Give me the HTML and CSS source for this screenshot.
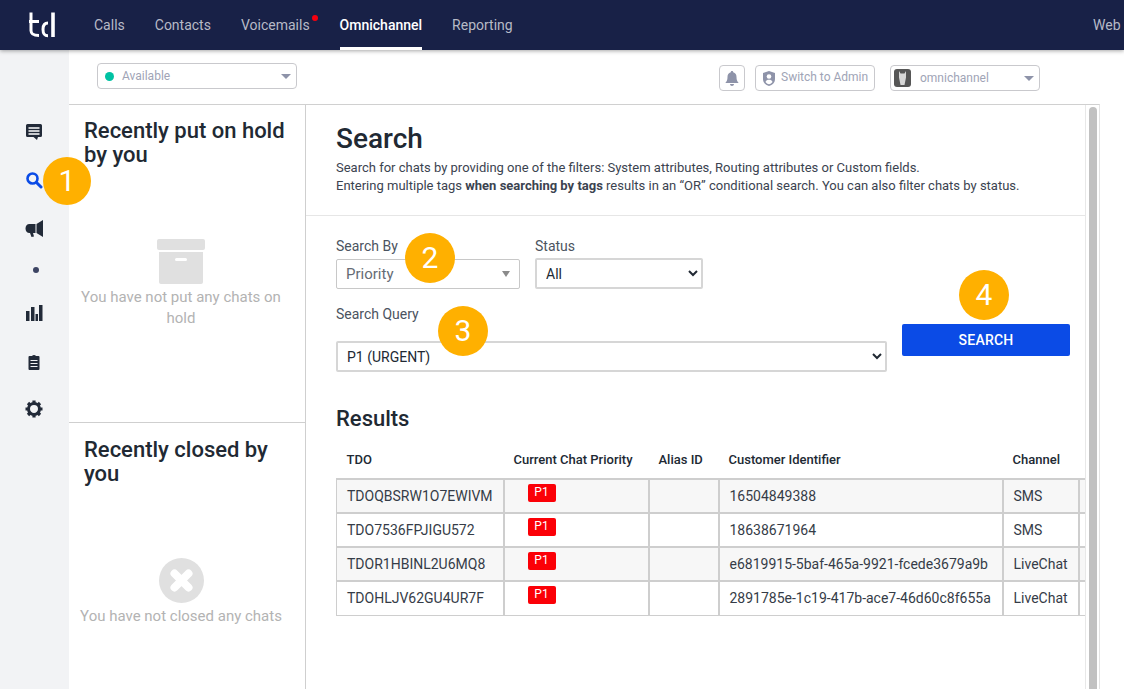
FILE: index.html
```html
<!DOCTYPE html>
<html lang="en">
<head>
<meta charset="utf-8">
<title>Omnichannel Search</title>
<link rel="stylesheet" href="styles.css">
</head>
<body>
<header class="topbar">
  <div class="logo">
    <svg width="29" height="26" viewBox="0 0 29 26" fill="none" stroke="#fff" stroke-width="3">
      <path d="M4 0.500V18.500C4 22 6 23.500 12 23.500M2 9.500H12"/>
      <path d="M21 11C17 11 16 13.500 16 17.300C16 21.500 17 23.700 21 23.700"/>
      <path d="M26 0.500V25" stroke-width="3.600"/>
    </svg>
  </div>
  <nav class="nav">
    <a class="nav-item">Calls</a>
    <a class="nav-item">Contacts</a>
    <a class="nav-item has-dot">Voicemails</a>
    <a class="nav-item active">Omnichannel</a>
    <a class="nav-item">Reporting</a>
  </nav>
  <span class="web">Web</span>
</header>

<div class="shell">
  <aside class="rail">
    <svg class="rail-icon" viewBox="0 0 18 18"><path fill="#222a38" d="M2.500 1h13A1.500 1.500 0 0 1 17 2.500v10a1.500 1.500 0 0 1-1.500 1.500H13l-1 3-3.500-3h-6A1.500 1.500 0 0 1 1 12.500v-10A1.500 1.500 0 0 1 2.500 1z"/><path stroke="#fff" stroke-width="1.300" d="M3.500 5h11M3.500 8h11M3.500 11h11"/></svg>
    <svg class="rail-icon" viewBox="0 0 18 18" fill="none" stroke="#0b4be6"><circle cx="7.500" cy="7.500" r="5" stroke-width="2.600"/><path stroke-width="3" stroke-linecap="round" d="M11.500 11.500L16 16"/></svg>
    <svg class="rail-icon" viewBox="0 0 18 18"><path fill="#222a38" d="M18 1v17l-6.500-4V5zM10.500 5v9H4.500C2 14 .5 12 .5 9.500S2 5 4.500 5z"/><path fill="#222a38" d="M5 14h3l1 3.500-2.500.5z"/></svg>
    <span class="rail-dot"></span>
    <svg class="rail-icon" viewBox="0 0 18 18"><path fill="#222a38" d="M1 7h3.500v10H1zM6 3h3.500v14H6zM10.500 10H13v7h-2.500zM14 1h3.500v16H14z"/></svg>
    <svg class="rail-icon" viewBox="0 0 18 18"><path fill="#222a38" d="M4.500 4H7a2.500 2.200 0 0 1 4 0h2.500A1 1 0 0 1 14.500 5v12a1 1 0 0 1-1 1h-9a1 1 0 0 1-1-1V5a1 1 0 0 1 1-1z"/><path stroke="#f2f3f5" stroke-width="1.100" d="M5.500 8.500h7M5.500 11.500h7M5.500 14.500h7"/></svg>
    <svg class="rail-icon" viewBox="0 0 18 18"><path fill="none" stroke="#222a38" stroke-width="3" d="M9 3.500a5.500 5.500 0 1 0 0 11a5.500 5.500 0 1 0 0-11z"/><path stroke="#222a38" stroke-width="3.200" d="M9 .5v3M9 14.500v3M.5 9h3M14.500 9h3M3 3l2 2M13 13l2 2M15 3l-2 2M5 13l-2 2"/></svg>
    <span class="badge badge-1">1</span>
  </aside>

  <div class="content">
    <div class="toolbar">
      <div class="status-select">
        <span class="status-dot"></span>
        <span class="status-text">Available</span>
        <span class="caret"></span>
      </div>
      <div class="toolbar-right">
        <button class="tool-btn bell" type="button" aria-label="Notifications">
          <svg width="14" height="15" viewBox="0 0 14 15"><path fill="#8e93a9" d="M7 0c.8 0 1.200.5 1.200 1.200C10.500 1.800 11.500 3.500 11.500 6c0 3 .7 4.500 2.200 6H.3C1.800 10.500 2.500 9 2.500 6c0-2.500 1-4.200 3.300-4.800C5.800.5 6.200 0 7 0zM5 13h4c0 1.200-.9 2-2 2s-2-.8-2-2z"/></svg>
        </button>
        <button class="tool-btn admin" type="button">
          <svg width="12" height="15" viewBox="0 0 12 15"><path fill="#8e93a9" d="M6 0l6 2v6c0 3.500-2.500 6-6 7-3.500-1-6-3.500-6-7V2z"/><circle cx="6" cy="5.500" r="2.300" fill="#fff"/><path fill="#fff" d="M2.500 11C3 9.300 4.300 8.800 6 8.800s3 .5 3.500 2.200C8.700 12.300 7.400 13 6 13.200 4.600 13 3.300 12.300 2.500 11z"/></svg>
          <span>Switch to Admin</span>
        </button>
        <div class="profile">
          <svg class="avatar" width="17" height="18" viewBox="0 0 17 18"><rect width="17" height="18" rx="3" fill="#565656"/><path fill="#d8d8d8" d="M5 2l1.500 2.500h4L12 2v6.500L10.500 16h-4L5 8.500z"/></svg>
          <span class="profile-name">omnichannel</span>
          <span class="caret"></span>
        </div>
      </div>
    </div>

    <div class="workspace">
      <section class="side">
        <div class="side-block hold">
          <h2 class="side-title">Recently put on hold by you</h2>
          <div class="empty empty-hold">
            <svg width="48" height="45" viewBox="0 0 48 45"><rect width="48" height="11" rx="2" fill="#e0e0e0"/><path fill="#e0e0e0" d="M2 13h44v30a2 2 0 0 1-2 2H4a2 2 0 0 1-2-2z"/><rect x="18" y="19" width="12" height="3" rx="1.500" fill="#fff"/></svg>
            <p>You have not put any chats on hold</p>
          </div>
        </div>
        <div class="side-block closed">
          <h2 class="side-title">Recently closed by you</h2>
          <div class="empty empty-closed">
            <svg width="45" height="45" viewBox="0 0 45 45"><circle cx="22.500" cy="22.500" r="22.500" fill="#e0e0e0"/><path stroke="#fff" stroke-width="8" stroke-linecap="round" d="M15.500 15.500l14 14M29.500 15.500l-14 14"/></svg>
            <p>You have not closed any chats</p>
          </div>
        </div>
      </section>

      <main class="main">
        <div class="scroll-area">
          <div class="intro">
            <h1>Search</h1>
            <p>Search for chats by providing one of the filters: System attributes, Routing attributes or Custom fields.</p>
            <p>Entering multiple tags <b>when searching by tags</b> results in an “OR” conditional search. You can also filter chats by status.</p>
          </div>
          <div class="form">
            <div class="form-left">
              <div class="form-row">
                <div class="field field-by">
                  <label class="label">Search By</label>
                  <div class="fake-select"><span>Priority</span><span class="caret small"></span></div>
                  <span class="badge badge-2">2</span>
                </div>
                <div class="field field-status">
                  <label class="label" for="status">Status</label>
                  <select id="status" class="native"><option>All</option></select>
                </div>
              </div>
              <div class="field field-query">
                <label class="label" for="query">Search Query</label>
                <select id="query" class="native"><option>P1 (URGENT)</option></select>
                <span class="badge badge-3">3</span>
              </div>
            </div>
            <div class="form-action">
              <span class="badge badge-4">4</span>
              <button class="search-btn" type="button">SEARCH</button>
            </div>
          </div>
          <div class="results">
            <h2>Results</h2>
            <table class="table">
              <colgroup>
                <col class="c1"><col class="c2"><col class="c3"><col class="c4"><col class="c5"><col class="c6">
              </colgroup>
              <thead>
                <tr><th>TDO</th><th>Current Chat Priority</th><th>Alias ID</th><th>Customer Identifier</th><th>Channel</th><th></th></tr>
              </thead>
              <tbody>
                <tr><td>TDOQBSRW1O7EWIVM</td><td><span class="tag">P1</span></td><td></td><td>16504849388</td><td>SMS</td><td></td></tr>
                <tr><td>TDO7536FPJIGU572</td><td><span class="tag">P1</span></td><td></td><td>18638671964</td><td>SMS</td><td></td></tr>
                <tr><td>TDOR1HBINL2U6MQ8</td><td><span class="tag">P1</span></td><td></td><td>e6819915-5baf-465a-9921-fcede3679a9b</td><td>LiveChat</td><td></td></tr>
                <tr><td>TDOHLJV62GU4UR7F</td><td><span class="tag">P1</span></td><td></td><td>2891785e-1c19-417b-ace7-46d60c8f655a</td><td>LiveChat</td><td></td></tr>
              </tbody>
            </table>
          </div>
        </div>
        <div class="scrollbar"><span class="thumb"></span></div>
      </main>
    </div>
  </div>
</div>
</body>
</html>
```

FILE: styles.css
```css
* { box-sizing: border-box; }
html, body { height: 100%; }
body {
  margin: 0;
  height: 689px;
  overflow: hidden;
  background: #fff;
  color: #212933;
  font-family: Roboto, "Liberation Sans", sans-serif;
  display: flex;
  flex-direction: column;
}
p, h1, h2 { margin: 0; }

/* Top bar */
.topbar {
  flex: 0 0 50px;
  height: 50px;
  background: #182147;
  display: flex;
  align-items: stretch;
  box-shadow: 0 1px 4px rgba(0, 0, 0, .35);
  position: relative;
  z-index: 2;
}
.logo { width: 94px; padding: 12px 0 0 27px; }
.nav { display: flex; gap: 30px; }
.nav-item {
  position: relative;
  display: block;
  font-size: 14px;
  line-height: 50px;
  color: #b7bac6;
  height: 50px;
}
.nav-item.active { color: #fff; font-weight: 500; border-bottom: 3px solid #fff; }
.has-dot::after {
  content: "";
  position: absolute;
  top: 15px;
  right: -8px;
  width: 6px;
  height: 6px;
  border-radius: 50%;
  background: #f5000f;
}
.web { margin-left: auto; font-size: 14px; line-height: 50px; color: #b7bac6; width: 31px; white-space: nowrap; }

/* Layout */
.shell { flex: 1; display: flex; min-height: 0; }
.rail {
  flex: 0 0 69px;
  background: #f2f3f5;
  position: relative;
  display: flex;
  flex-direction: column;
  padding: 73px 0 0 0;
  width: 69px;
}
.rail-icon { width: 18px; height: 18px; margin: 0 0 30px 25px; display: block; flex: none; }
.rail-dot { width: 6px; height: 6px; border-radius: 50%; background: #3d4463; margin: 0 0 31px 33px; flex: none; }

.content { flex: 1; min-width: 0; display: flex; flex-direction: column; }
.toolbar {
  flex: 0 0 54px;
  display: flex;
  justify-content: space-between;
  padding: 13px 84px 0 28px;
  align-items: flex-start;
}
.status-select {
  width: 200px;
  height: 26px;
  border: 1px solid #c9c9cd;
  border-radius: 4px;
  display: flex;
  align-items: center;
  padding: 0 5px 0 7px;
  font-size: 12px;
  color: #a0a4b6;
}
.status-dot { width: 9px; height: 9px; border-radius: 50%; background: #00c2a3; margin-right: 8px; }
.status-text { flex: 1; }
.caret { width: 0; height: 0; border-left: 5px solid transparent; border-right: 5px solid transparent; border-top: 5px solid #8e93a9; display: block; }
.caret.small { border-left-width: 4px; border-right-width: 4px; border-top-width: 6px; border-top-color: #8b8b8b; }

.toolbar-right { display: flex; padding-top: 2px; }
.tool-btn {
  height: 26px;
  background: #fff;
  border: 1px solid #c9c9cd;
  border-radius: 4px;
  display: flex;
  align-items: center;
  padding: 0;
  font-family: inherit;
}
.bell { width: 26px; justify-content: center; margin-right: 10px; }
.admin { width: 120px; padding-left: 7px; font-size: 12px; color: #a0a4b6; gap: 6px; white-space: nowrap; margin-right: 15px; }
.admin span { position: relative; top: -1px; }
.profile {
  width: 150px;
  height: 26px;
  border: 1px solid #c9c9cd;
  border-radius: 4px;
  display: flex;
  align-items: center;
  padding: 0 5px 0 3px;
  font-size: 12px;
  color: #a0a4b6;
}
.avatar { margin-right: 9px; flex: none; }
.profile-name { flex: 1; }

.workspace {
  flex: 1;
  display: flex;
  min-height: 0;
  border-top: 1px solid #d0d0d0;
  width: 1031px;
  border-right: 1px solid #e3e3e3;
}

/* Left column */
.side { flex: 0 0 237px; border-right: 1px solid #cfcfcf; display: flex; flex-direction: column; }
.side-block { padding: 14px 15px 0; }
.hold { height: 318px; border-bottom: 1px solid #cfcfcf; flex: none; }
.closed { flex: 1; padding-top: 15px; }
.side-title { font-size: 22px; line-height: 24px; font-weight: 500; color: #212933; }
.empty { display: flex; flex-direction: column; align-items: center; text-align: center; font-size: 15px; line-height: 21px; color: #b3b3b3; margin-left: -6px; margin-right: 6px; }
.empty-hold { margin-top: 72px; }
.empty-hold svg { margin-bottom: 3px; }
.empty-closed { margin-top: 72px; }
.empty-closed svg { margin-bottom: 3px; }
.empty-closed p { white-space: nowrap; }

/* Main */
.main { flex: 1; min-width: 0; display: flex; }
.scroll-area { flex: 1; min-width: 0; overflow: hidden; border-right: 1px solid #e8e8e8; }
.scrollbar { flex: 0 0 13px; padding: 2px 2px 0 3px; background: #fff; }
.thumb { display: block; height: 100%; background: #c1c1c1; border-radius: 4px 4px 0 0; }

.intro { height: 111px; border-bottom: 1px solid #e6e6e6; padding: 17px 30px 0; font-size: 13px; line-height: 18px; color: #3b4350; }
.intro h1 { font-size: 28px; line-height: 34px; font-weight: 500; color: #212933; margin-bottom: 3px; }
.intro b { font-weight: 700; color: #3b4350; }

.form { display: flex; padding: 20px 14px 0 30px; }
.form-left { flex: 0 0 551px; }
.form-row { display: flex; gap: 15px; }
.field { position: relative; display: flex; flex-direction: column; }
.field-by { width: 184px; }
.field-status { width: 168px; }
.field-query { margin-top: 15px; }
.label { font-size: 14px; line-height: 20px; color: #4b5360; display: block; }
.fake-select {
  height: 30px;
  margin-top: 3px;
  border: 1px solid #c8c8c8;
  border-radius: 2px;
  display: flex;
  align-items: center;
  justify-content: space-between;
  padding: 0 9px;
  font-size: 15px;
  color: #666c75;
}
.native {
  display: block;
  width: 100%;
  height: 31px;
  margin-top: 2px;
  background: #fff;
  border: 2px solid #d6d6d6;
  border-radius: 2px;
  font-family: inherit;
  font-size: 14px;
  color: #212933;
  padding: 0 5px;
}
.field-query .native { margin-top: 17px; }
.form-action { margin-left: 15px; flex: 0 0 168px; padding-top: 88px; position: relative; }
.search-btn {
  width: 168px;
  height: 32px;
  border: 0;
  border-radius: 2px;
  background: #0b4be6;
  color: #fff;
  font-family: inherit;
  font-size: 14px;
  font-weight: 500;
  letter-spacing: .2px;
}

.results { padding: 33px 0 0 30px; }
.results h2 { font-size: 22px; line-height: 28px; font-weight: 500; color: #212933; margin-bottom: 19px; }
.table { border-collapse: collapse; table-layout: fixed; width: 752px; font-size: 14px; color: #353c47; }
.c1 { width: 167px; } .c2 { width: 145px; } .c3 { width: 70px; } .c4 { width: 284px; } .c5 { width: 76px; } .c6 { width: 10px; }
.table th { text-align: left; font-size: 13px; font-weight: 500; color: #212933; padding: 0 0 0 10px; height: 27px; line-height: 16px; vertical-align: top; white-space: nowrap; }
.table td { border: 2px solid #cecece; height: 34px; padding: 0 0 0 10px; white-space: nowrap; overflow: hidden; vertical-align: middle; }
.table td:first-child { border-left-width: 1px; }
.table tbody tr:nth-child(odd) td { background: #f7f7f7; }
.table tr:last-child td { border-bottom-width: 1px; }
.tag {
  display: block;
  width: 28px;
  height: 18px;
  margin: -7px 0 0 13px;
  background: #fb0007;
  border-radius: 2px;
  color: #fff;
  font-size: 12px;
  line-height: 16px;
  text-align: center;
}

/* Numbered callouts */
.badge {
  position: absolute;
  width: 50px;
  height: 50px;
  border-radius: 50%;
  background: #ffb000;
  color: #fff;
  font-size: 30px;
  font-weight: 400;
  line-height: 50px;
  text-align: center;
  z-index: 3;
}
.badge-1 { left: 43px; top: 107px; width: 48px; height: 48px; line-height: 48px; }
.badge-2 { left: 69px; top: -3px; }
.badge-3 { left: 102px; top: 2px; }
.badge-4 { left: 57px; top: 34px; }
```
